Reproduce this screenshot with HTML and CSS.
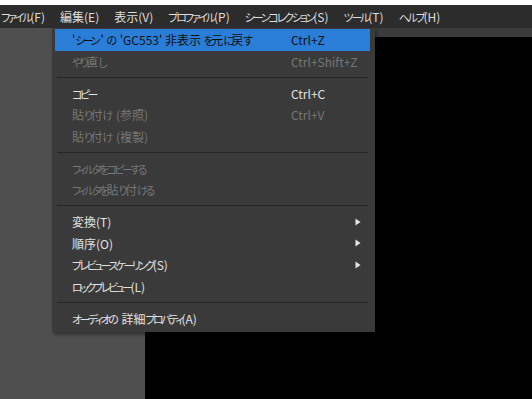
FILE: index.html
```html
<!DOCTYPE html>
<html lang="ja">
<head>
<meta charset="utf-8">
<link rel="stylesheet" href="styles.css">
</head>
<body>
<div class="app">
  <div class="topgap"></div>
  <div class="menubar">
    <span class="mb-item"><span class="k">ファイル</span>(F)</span>
    <span class="mb-item">編集(E)</span>
    <span class="mb-item">表示(V)</span>
    <span class="mb-item"><span class="k">プロファイル</span>(P)</span>
    <span class="mb-item"><span class="k">シーンコレクション</span>(S)</span>
    <span class="mb-item"><span class="k">ツール</span>(T)</span>
    <span class="mb-item"><span class="k">ヘルプ</span>(H)</span>
  </div>
  <div class="workspace">
    <div class="leftpanel"></div>
    <div class="rightarea">
      <div class="strip"></div>
      <div class="canvas"></div>
    </div>
  </div>
  <div class="menu">
    <div class="item active"><span class="label">'<span class="k sp">シーン</span>' <span class="k sp">の</span> 'GC553' 非表示 <span class="k">を</span>元<span class="k">に</span>戻<span class="k">す</span></span><span class="sc">Ctrl+Z</span><span class="arr"></span></div>
    <div class="item disabled"><span class="label"><span class="k">やり</span>直<span class="k">し</span></span><span class="sc">Ctrl+Shift+Z</span><span class="arr"></span></div>
    <div class="sep"></div>
    <div class="item"><span class="label"><span class="k">コピー</span></span><span class="sc">Ctrl+C</span><span class="arr"></span></div>
    <div class="item disabled"><span class="label">貼<span class="k">り</span>付<span class="k sp">け</span> (参照)</span><span class="sc">Ctrl+V</span><span class="arr"></span></div>
    <div class="item disabled"><span class="label">貼<span class="k">り</span>付<span class="k sp">け</span> (複製)</span><span class="sc"></span><span class="arr"></span></div>
    <div class="sep"></div>
    <div class="item disabled"><span class="label"><span class="k">フィルタをコピーする</span></span><span class="sc"></span><span class="arr"></span></div>
    <div class="item disabled"><span class="label"><span class="k">フィルタを</span>貼<span class="k">り</span>付<span class="k">ける</span></span><span class="sc"></span><span class="arr"></span></div>
    <div class="sep"></div>
    <div class="item"><span class="label">変換(T)</span><span class="sc"></span><span class="arr"><svg width="6" height="8" viewBox="0 0 6 8"><path d="M0.5 0.5 L5.5 4 L0.5 7.5 Z" fill="#e6e6e6"/></svg></span></div>
    <div class="item"><span class="label">順序(O)</span><span class="sc"></span><span class="arr"><svg width="6" height="8" viewBox="0 0 6 8"><path d="M0.5 0.5 L5.5 4 L0.5 7.5 Z" fill="#e6e6e6"/></svg></span></div>
    <div class="item"><span class="label"><span class="k">プレビュースケーリング</span>(S)</span><span class="sc"></span><span class="arr"><svg width="6" height="8" viewBox="0 0 6 8"><path d="M0.5 0.5 L5.5 4 L0.5 7.5 Z" fill="#e6e6e6"/></svg></span></div>
    <div class="item"><span class="label"><span class="k">ロックプレビュー</span>(L)</span><span class="sc"></span><span class="arr"></span></div>
    <div class="sep"></div>
    <div class="item"><span class="label"><span class="k sp">オーディオの</span> 詳細<span class="k">プロパティ</span>(A)</span><span class="sc"></span><span class="arr"></span></div>
  </div>
</div>
</body>
</html>
```

FILE: styles.css
```css
* { box-sizing: border-box; }
html, body { margin: 0; padding: 0; }
body {
  width: 532px;
  height: 399px;
  overflow: hidden;
  background: #ffffff;
  font-family: "Noto Sans CJK JP", "Noto Sans", sans-serif;
  font-feature-settings: "palt" 1;
  font-size: 12px;
}
.app {
  position: relative;
  width: 532px;
  height: 399px;
  display: flex;
  flex-direction: column;
}
.k { font-size: 11px; letter-spacing: -2.2px; }
.menu .k { letter-spacing: -2.6px; }
.menu .k.sp { padding-right: 2.6px; }
.topgap { height: 5px; background: #ffffff; }
.menubar {
  height: 23px;
  background: #2c2c2c;
  display: flex;
  align-items: center;
  color: #dedede;
  padding-left: 1px;
}
.mb-item { margin-right: 15px; line-height: 23px; }
.workspace { flex: 1; display: flex; }
.leftpanel { width: 145px; background: #4f4f4f; }
.rightarea { flex: 1; display: flex; flex-direction: column; }
.strip { height: 9px; background: #3b3b3b; }
.canvas { flex: 1; background: #000000; }

.menu {
  position: absolute;
  left: 52px;
  top: 28px;
  width: 323px;
  background: #3a3a3a;
  padding: 1px 5px 3px 3px;
  box-shadow: 2px 3px 3px rgba(0, 0, 0, 0.35);
}
.item {
  height: 21.5px;
  display: grid;
  grid-template-columns: 219px 1fr 6px;
  align-items: center;
  padding: 0 9px 0 17px;
  color: #e2e2e2;
  white-space: nowrap;
}
.item.active { background: #2a7ed8; color: #101010; }
.item.disabled { color: #767676; }
.arr { display: flex; align-items: center; }
.sep {
  height: 10.5px;
  display: flex;
  align-items: center;
  padding: 0 2px;
}
.sep::after {
  content: "";
  display: block;
  width: 100%;
  height: 1px;
  background: #252525;
}
```
